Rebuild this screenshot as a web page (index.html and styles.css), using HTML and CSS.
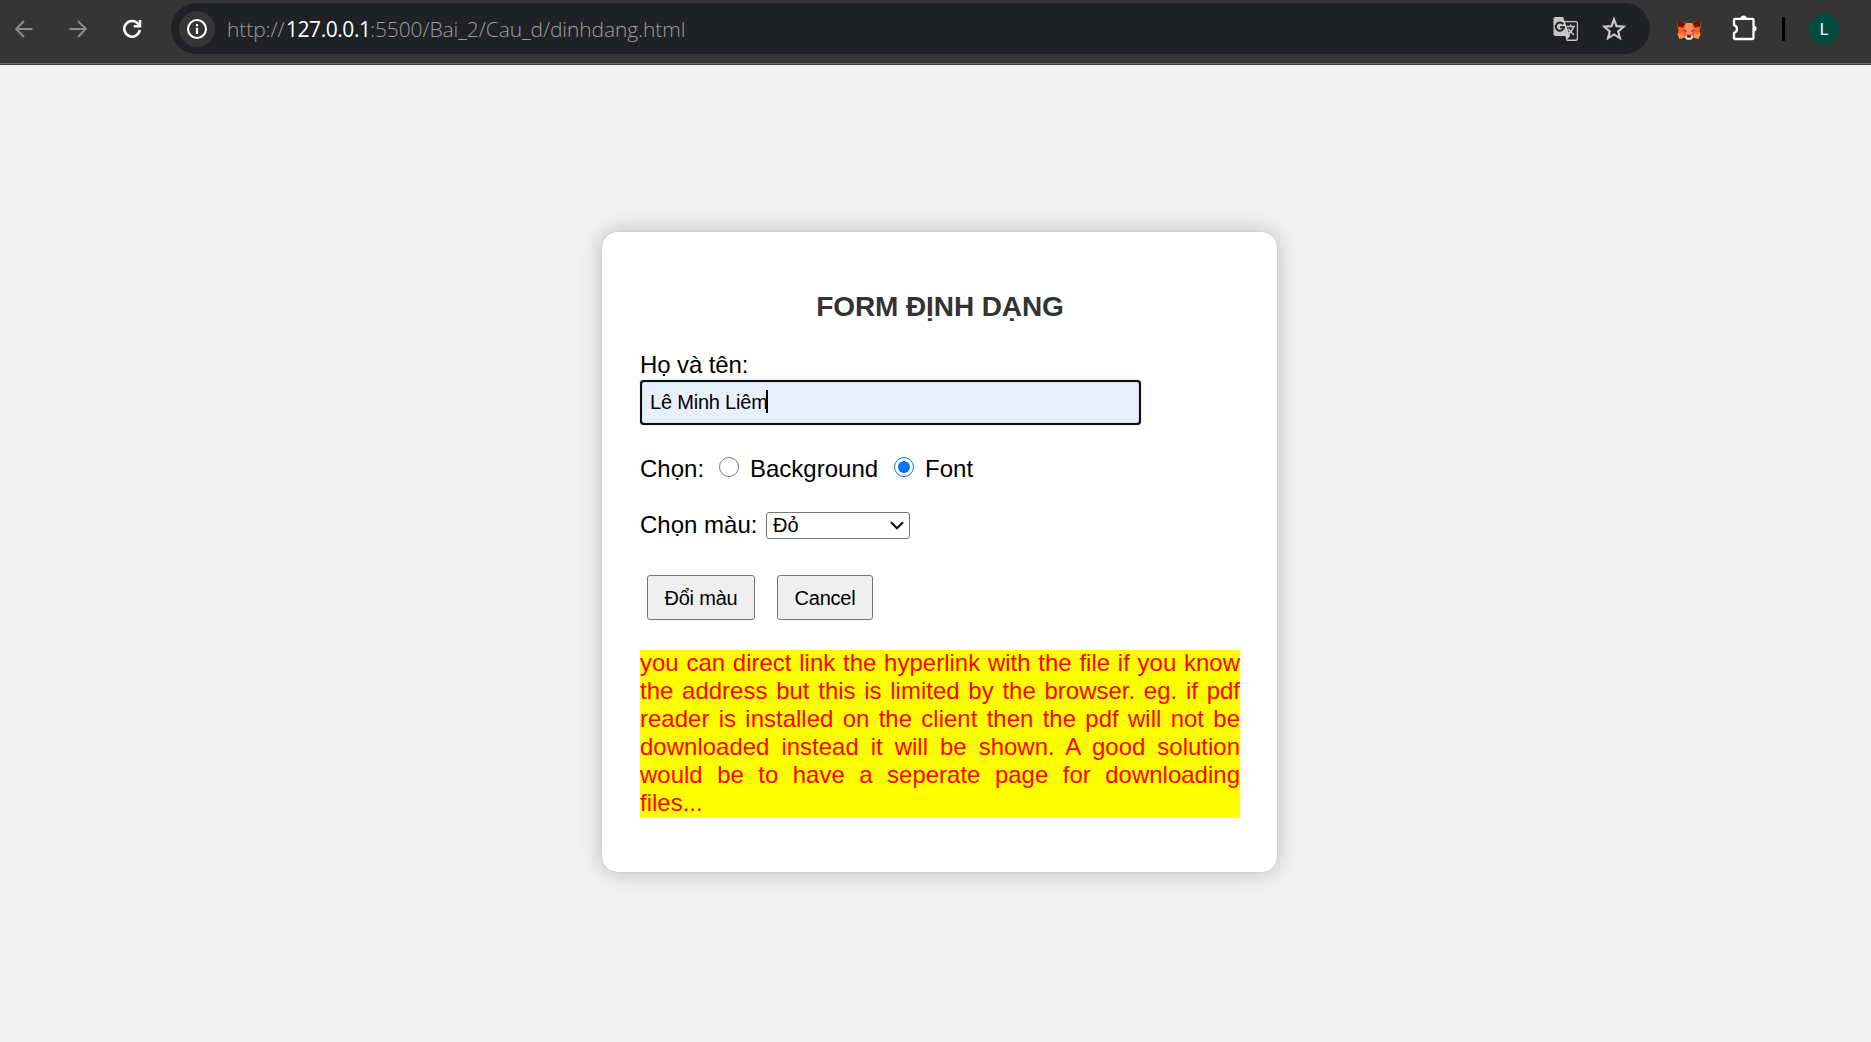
FILE: index.html
```html
<!DOCTYPE html>
<html lang="vi">
<head>
<meta charset="utf-8">
<title>Form định dạng</title>
<link rel="stylesheet" href="styles.css">
</head>
<body>
<header class="toolbar">
  <svg class="nav back" viewBox="0 0 18 18"><path d="M17.5 9H1.5M9 1L1.2 9 9 17"/></svg>
  <svg class="nav forward" viewBox="0 0 18 18"><path d="M.5 9h16M9 1l7.8 8L9 17"/></svg>
  <svg class="reload" viewBox="0 0 20 20"><path d="M17.8 11a7.8 7.8 0 1 1-1.8-6.3l1.5 1.6"/><path d="M18 1v6.2h-6.2"/></svg>
  <div class="address">
    <span class="info"><svg viewBox="0 0 22 22"><circle cx="11" cy="11" r="9"/><path d="M11 9.8V16M11 6v2.2"/></svg></span>
    <span class="url"><span class="scheme">http://</span><span class="host">127.0.0.1</span><span class="path">:5500/Bai_2/Cau_d/dinhdang.html</span></span>
    <svg class="translate" viewBox="0 0 26 26">
      <path class="fill" d="M2.5 1h7.6l1.4 4h11.2A2.3 2.3 0 0 1 25 7.3v15.4a2.3 2.3 0 0 1-2.3 2.3h-9L12.3 20H2.5A2 2 0 0 1 .5 18V3a2 2 0 0 1 2-2z"/>
      <path class="cut" d="M12 6.2l5.1 13.8-3 3.6h8.3a1.4 1.4 0 0 0 1.4-1.4V7.6a1.4 1.4 0 0 0-1.4-1.4z"/>
      <path class="g" d="M10.2 8.2A4.1 4.1 0 1 0 11 11.2H7"/>
      <path class="glyph" d="M13.5 10.5h8.5M17.6 8.5v2M20.5 10.5c-.8 3.4-3 6-5.5 8M15.2 12.5c1.2 2.5 3.2 4.6 5.8 6.3"/>
    </svg>
    <svg class="star" viewBox="0 0 24 24"><path d="M12 3.2l2.3 6.2 6.600.5-5 4.300 1.600 6.300-5.500-3.500-5.500 3.500 1.600-6.300-5-4.300 6.600-.5z"/></svg>
  </div>
  <svg class="fox" viewBox="0 0 24 22">
    <path fill="#f5622a" d="M1 .5l8 4.500h6l8-4.500.5 8-1 4.500 1 3-2 5-5-1.500-2 2H9.500l-2-2-5 1.500-2-5 1-3-1-4.500z"/>
    <path fill="#661800" d="M1 .3l7.500 5-2.500 4.200-5-1zM23 .3l-7.500 5 2.500 4.200 5-1z"/>
    <path fill="#ff8d5d" d="M9 5h6l1.500 6-2 5.500h-5l-2-5.500zM.5 16l6-.5 1 4-5 1.500zM23.500 16l-6-.5-1 4 5 1.500z"/>
    <path fill="#74321f" d="M6 12.500l3-.8.8 2.300zM18 12.500l-3-.8-.8 2.300z"/>
    <path fill="#f4e5df" d="M7.500 18.800l2.500-1.300h4l2.500 1.300-2.500 3h-4z"/>
    <path fill="#161616" d="M10.300 17.300h3.400l.4 2.200H9.900z"/>
  </svg>
  <svg class="puzzle" viewBox="0 0 26 26"><path class="tab" d="M8.500 3.500a3.100 3.100 0 0 1 6.200 0zM21.500 10.500a3.100 3.100 0 0 1 0 6.200z"/><path d="M3 3.800h17.500a1 1 0 0 1 1 1V23a1 1 0 0 1-1 1H3a1 1 0 0 1-1-1v-5c4-1.500 4-6.500 0-8V4.800a1 1 0 0 1 1-1z"/></svg>
  <span class="divider"></span>
  <span class="avatar">L</span>
</header>
<main class="page">
  <form class="card">
    <h3 class="title">FORM ĐỊNH DẠNG</h3>
    <label class="name-label" for="name">Họ và tên:</label>
    <div class="name-field"><input class="name" id="name" type="text" value="Lê Minh Liêm"><span class="caret"></span></div>
    <div class="choices">
      <span class="choice-label">Chọn:</span>
      <label class="choice"><input type="radio" class="radio" name="target"><span>Background</span></label>
      <label class="choice"><input type="radio" class="radio" name="target" checked><span>Font</span></label>
    </div>
    <div class="color-row">
      <label for="color">Chọn màu:</label>
      <span class="select-box">
        <select class="color" id="color"><option>Đỏ</option></select>
        <svg class="chevron" viewBox="0 0 14 9"><path d="M1 1.200l6 6 6-6"/></svg>
      </span>
    </div>
    <div class="actions">
      <button class="button change" type="button">Đổi màu</button>
      <button class="button cancel" type="button">Cancel</button>
    </div>
    <p class="sample">you can direct link the hyperlink with the file if you know the address but this is limited by the browser. eg. if pdf reader is installed on the client then the pdf will not be downloaded instead it will be shown. A good solution would be to have a seperate page for downloading files...</p>
  </form>
</main>
</body>
</html>
```
FILE: styles.css
```css
* { box-sizing: border-box; }
body {
  margin: 0;
  height: 1042px;
  overflow: hidden;
  background: #f2f2f2;
  color: #000;
  font: 24px/28px "Liberation Sans", Arial, sans-serif;
}
svg { display: block; flex: none; fill: none; }

/* Browser toolbar */
.toolbar {
  height: 65px;
  display: flex;
  align-items: center;
  padding: 0 0 7px 15px;
  background: #353535;
  border-bottom: 1px solid #3c3c3c;
  box-shadow: inset 0 -1px #6a6a6a;
}
.nav { width: 18px; height: 18px; stroke: #8c8c8c; stroke-width: 2; }
.forward { margin-left: 36px; }
.reload { width: 20px; height: 20px; margin-left: 35px; stroke: #fff; stroke-width: 2.5; }
.address {
  width: 1479px;
  height: 51px;
  margin-left: 29px;
  padding: 0 23px 0 8px;
  display: flex;
  align-items: center;
  border-radius: 26px;
  background: #202124;
}
.info {
  width: 36px;
  height: 36px;
  display: grid;
  place-items: center;
  border-radius: 50%;
  background: #353535;
}
.info svg { width: 22px; height: 22px; stroke: #fff; stroke-width: 2.1; }
.url {
  flex: 1;
  display: flex;
  margin-left: 12px;
  color: #9d9d9d;
  font: 300 21px/28px "Open Sans", "Noto Sans", sans-serif;
  white-space: nowrap;
}
.scheme { width: 59px; letter-spacing: -.1px; }
.host { width: 84px; color: #fff; font-weight: 400; letter-spacing: -.45px; }
.path { letter-spacing: -.1px; }
.translate { width: 26px; height: 26px; }
.translate .fill { fill: #c7c7c7; }
.translate .cut { fill: #202124; }
.translate .g { stroke: #202124; stroke-width: 2; }
.translate .glyph { stroke: #c7c7c7; stroke-width: 1.5; }
.star { width: 26px; height: 26px; margin-left: 22px; stroke: #c7c7c7; stroke-width: 2; }
.fox { width: 24px; height: 22px; margin-left: 27px; }
.puzzle { width: 26px; height: 26px; margin: -2px 0 0 31px; stroke: #fff; stroke-width: 2.3; }
.puzzle .tab { fill: #fff; stroke: none; }
.divider { width: 3px; height: 24px; margin-left: 24px; border-radius: 1px; background: #000; }
.avatar {
  width: 30px;
  height: 30px;
  margin-left: 24px;
  border-radius: 50%;
  background: #004d40;
  color: #fff;
  font: 16px/31px Roboto, sans-serif;
  text-align: center;
}

/* Form card */
.page { display: flex; justify-content: center; padding: 167px 0 0 8px; }
.card {
  width: 675px;
  height: 640px;
  display: flex;
  flex-direction: column;
  padding: 59px 37px 0 38px;
  border-radius: 15px;
  background: #fff;
  box-shadow: 0 0 1px rgba(0, 0, 0, .35), 0 0 22px rgba(0, 0, 0, .24);
}
.title {
  margin: 0 0 28px;
  color: #333;
  font-size: 28px;
  line-height: 32px;
  letter-spacing: -.1px;
  text-align: center;
}
.name-label { letter-spacing: -.1px; }
.name-field { display: grid; align-items: center; width: 501px; height: 46px; }
.name {
  grid-area: 1 / 1;
  width: 501px;
  height: 45px;
  padding: 0 8px;
  border: 2px solid #101010;
  border-radius: 4px;
  outline: 0;
  background: #e8f0fe;
  box-shadow: 0 0 1px #555, inset 0 0 1px #444;
  font: 20px "Liberation Sans", Arial, sans-serif;
  letter-spacing: -.2px;
}
.caret { grid-area: 1 / 1; width: 2px; height: 23px; margin: -2px 0 0 126px; background: #000; z-index: 1; }
.choices { display: flex; margin-top: 30px; }
.choice-label { width: 79px; }
.choice { display: flex; }
.choice + .choice { margin-left: 16px; }
.radio { width: 20px; height: 20px; margin: 2px 11px 0 0; accent-color: #0075ff; }
.color-row { display: flex; margin-top: 28px; }
.color-row label { width: 126px; }
.select-box { display: grid; align-items: center; margin-top: 1px; }
.color {
  grid-area: 1 / 1;
  appearance: none;
  width: 144px;
  height: 27px;
  padding: 0 0 0 6px;
  border: 1px solid #767676;
  border-radius: 3px;
  background: #fff;
  color: #000;
  font: 20px/25px "Liberation Sans", Arial, sans-serif;
}
.chevron { grid-area: 1 / 1; justify-self: end; width: 14px; height: 9px; margin-right: 6px; stroke: #111; stroke-width: 2.200; }
.actions { display: flex; gap: 22px; margin: 36px 0 30px 7px; }
.button {
  height: 45px;
  padding: 2px 0 0;
  border: 1px solid #767676;
  border-radius: 3px;
  background: #efefef;
  color: #000;
  font: 20px "Liberation Sans", Arial, sans-serif;
  letter-spacing: -.2px;
}
.change { width: 108px; }
.cancel { width: 96px; }
/* The band stays put while its lines sit one pixel higher. */
.sample {
  width: 600px;
  height: 168px;
  margin: 0;
  background: linear-gradient(#ff0, #ff0) 0 1px no-repeat;
  color: #f00;
  text-align: justify;
  box-shadow: 0 1px #ff0;
  margin-top: -1px;
}
```
